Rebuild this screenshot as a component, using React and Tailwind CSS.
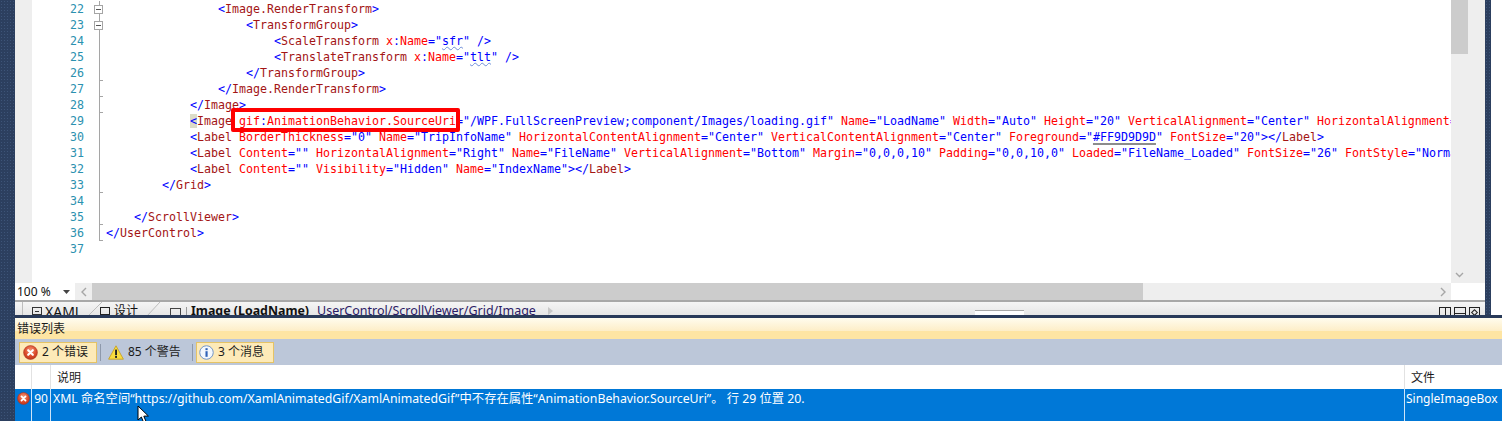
import React from 'react';

const monoFont = "font-['DejaVu_Sans_Mono','Liberation_Mono',monospace]";
const uiFont = "font-['Noto_Sans','Noto_Sans_CJK_SC',sans-serif]";
const navy = "bg-[#2c3f5f] bg-[radial-gradient(#3d5478_1px,transparent_1px)] bg-[length:3px_3px]";

const tag = 'text-[#0000ff]';
const el = 'text-[#a31515]';
const attr = 'text-[#ff0000]';

const T = ({ c, children }) => <span className={c}>{children}</span>;

const Attr = ({ name, value }) => (
  <>
    <T c={attr}> {name}</T>
    <T c={tag}>="{value}"</T>
  </>
);

const lines = [
  { n: 22, indent: 16, fold: true, body: <><T c={tag}>&lt;</T><T c={el}>Image.RenderTransform</T><T c={tag}>&gt;</T></> },
  { n: 23, indent: 20, fold: true, body: <><T c={tag}>&lt;</T><T c={el}>TransformGroup</T><T c={tag}>&gt;</T></> },
  { n: 24, indent: 24, body: <><T c={tag}>&lt;</T><T c={el}>ScaleTransform</T><T c={attr}> x</T><T c={tag}>:</T><T c={attr}>Name</T><T c={tag}>="</T><span className="text-[#0000ff] underline decoration-wavy decoration-[#6f8fd8] decoration-1">sfr</span><T c={tag}>" /&gt;</T></> },
  { n: 25, indent: 24, body: <><T c={tag}>&lt;</T><T c={el}>TranslateTransform</T><T c={attr}> x</T><T c={tag}>:</T><T c={attr}>Name</T><T c={tag}>="</T><span className="text-[#0000ff] underline decoration-wavy decoration-[#6f8fd8] decoration-1">tlt</span><T c={tag}>" /&gt;</T></> },
  { n: 26, indent: 20, tick: true, body: <><T c={tag}>&lt;/</T><T c={el}>TransformGroup</T><T c={tag}>&gt;</T></> },
  { n: 27, indent: 16, tick: true, body: <><T c={tag}>&lt;/</T><T c={el}>Image.RenderTransform</T><T c={tag}>&gt;</T></> },
  { n: 28, indent: 12, tick: true, body: <><T c={tag}>&lt;/</T><T c={el}>Image</T><T c={tag}>&gt;</T></> },
  {
    n: 29,
    indent: 12,
    body: (
      <>
        <span className="bg-[#dcdcc8] text-[#0000ff]">&lt;</span>
        <T c={el}>Image</T>
        <T c={attr}> gif</T><T c={tag}>:</T><T c={attr}>AnimationBehavior.SourceUri</T>
        <T c={tag}>="/WPF.FullScreenPreview;component/Images/loading.gif"</T>
        <Attr name="Name" value="LoadName" />
        <Attr name="Width" value="Auto" />
        <Attr name="Height" value="20" />
        <Attr name="VerticalAlignment" value="Center" />
        <T c={attr}> HorizontalAlignment</T><T c={tag}>=</T>
      </>
    ),
  },
  {
    n: 30,
    indent: 12,
    body: (
      <>
        <T c={tag}>&lt;</T><T c={el}>Label</T>
        <Attr name="BorderThickness" value="0" />
        <Attr name="Name" value="TripInfoName" />
        <Attr name="HorizontalContentAlignment" value="Center" />
        <Attr name="VerticalContentAlignment" value="Center" />
        <T c={attr}> Foreground</T><T c={tag}>="</T>
        <span className="text-[#0000ff] underline decoration-[#8c8c8c] decoration-2 underline-offset-2">#FF9D9D9D</span>
        <T c={tag}>"</T>
        <Attr name="FontSize" value="20" />
        <T c={tag}>&gt;&lt;/</T><T c={el}>Label</T><T c={tag}>&gt;</T>
      </>
    ),
  },
  {
    n: 31,
    indent: 12,
    body: (
      <>
        <T c={tag}>&lt;</T><T c={el}>Label</T>
        <Attr name="Content" value="" />
        <Attr name="HorizontalAlignment" value="Right" />
        <Attr name="Name" value="FileName" />
        <Attr name="VerticalAlignment" value="Bottom" />
        <Attr name="Margin" value="0,0,0,10" />
        <Attr name="Padding" value="0,0,10,0" />
        <Attr name="Loaded" value="FileName_Loaded" />
        <Attr name="FontSize" value="26" />
        <T c={attr}> FontStyle</T><T c={tag}>="Norma</T>
      </>
    ),
  },
  {
    n: 32,
    indent: 12,
    body: (
      <>
        <T c={tag}>&lt;</T><T c={el}>Label</T>
        <Attr name="Content" value="" />
        <Attr name="Visibility" value="Hidden" />
        <Attr name="Name" value="IndexName" />
        <T c={tag}>&gt;&lt;/</T><T c={el}>Label</T><T c={tag}>&gt;</T>
      </>
    ),
  },
  { n: 33, indent: 8, tick: true, body: <><T c={tag}>&lt;/</T><T c={el}>Grid</T><T c={tag}>&gt;</T></> },
  { n: 34, indent: 0, body: null },
  { n: 35, indent: 4, tick: true, body: <><T c={tag}>&lt;/</T><T c={el}>ScrollViewer</T><T c={tag}>&gt;</T></> },
  { n: 36, indent: 0, tick: true, body: <><T c={tag}>&lt;/</T><T c={el}>UserControl</T><T c={tag}>&gt;</T></> },
  { n: 37, indent: 0, body: null, noLine: true },
];

const FoldGutter = ({ line }) => (
  <div className="relative w-[12px] shrink-0 h-4">
    {!line.noLine && <div className="absolute left-[5px] top-0 bottom-0 w-px bg-[#a5a5a5]" />}
    {line.fold && (
      <div className="absolute left-0 top-[4px] w-[9px] h-[9px] border border-[#a5a5a5] bg-white flex items-center justify-center">
        <div className="w-[5px] h-px bg-[#555555]" />
      </div>
    )}
    {line.tick && <div className="absolute left-[5px] bottom-0 w-[4px] h-px bg-[#a5a5a5]" />}
  </div>
);

const ErrorIcon = ({ id, size = 15 }) => (
  <svg width={size} height={size} viewBox="0 0 16 16" className="shrink-0">
    <defs>
      <radialGradient id={id} cx="0.5" cy="0.35" r="0.75">
        <stop offset="0" stopColor="#f59a7c" />
        <stop offset="0.55" stopColor="#dc4a2a" />
        <stop offset="1" stopColor="#b0301a" />
      </radialGradient>
    </defs>
    <circle cx="8" cy="8" r="7.4" fill={`url(#${id})`} stroke="#a8341f" strokeWidth="0.6" />
    <path d="M5.5 5.5 L10.5 10.5 M10.5 5.5 L5.5 10.5" stroke="#ffffff" strokeWidth="2.2" strokeLinecap="round" />
  </svg>
);

const WarnIcon = () => (
  <svg width="16" height="15" viewBox="0 0 16 15" className="shrink-0">
    <path d="M8 0.8 L15.4 14.2 L0.6 14.2 Z" fill="#f9dc3e" stroke="#c39a1e" strokeWidth="0.8" strokeLinejoin="round" />
    <rect x="7.1" y="4.6" width="1.9" height="5.6" fill="#222222" />
    <rect x="7.1" y="11" width="1.9" height="1.9" fill="#222222" />
  </svg>
);

const InfoIcon = () => (
  <svg width="15" height="15" viewBox="0 0 16 16" className="shrink-0">
    <circle cx="8" cy="8" r="7.2" fill="#f4f8fd" stroke="#6a8fc4" strokeWidth="1" />
    <rect x="6.9" y="6.6" width="2.3" height="6" fill="#2f62b8" />
    <rect x="6.9" y="3.4" width="2.3" height="2.1" fill="#2f62b8" />
  </svg>
);

const FilterButton = ({ active, className, children }) => (
  <div
    className={`h-[21px] flex items-center gap-[4px] text-[12px] text-[#1b1b1b] border ${className} ${
      active ? 'bg-[#fdeab8] border-[#e5c365]' : 'border-transparent'
    }`}
  >
    {children}
  </div>
);

const App = () => {
  return (
    <div className={`relative w-[1502px] h-[421px] overflow-hidden flex flex-col ${navy} ${uiFont}`}>
      <div className="h-[315px] flex shrink-0 pl-[15px]">
        <div className="w-[1470px] shrink-0 flex flex-col bg-white">
          <div className="h-[283px] flex shrink-0">
            <div className="w-[17px] shrink-0 bg-[#eeeeee]" />
            <div className={`w-[1419px] shrink-0 overflow-hidden pt-[1px] ${monoFont} text-[11.63px] leading-4`}>
              {lines.map((line) => (
                <div key={line.n} className="flex h-4">
                  <div className="w-[52px] shrink-0 text-right text-[#2b91af]">{line.n}</div>
                  <div className="w-[10px] shrink-0" />
                  <FoldGutter line={line} />
                  <div className="whitespace-pre" style={{ paddingLeft: line.indent * 7 }}>
                    {line.body}
                  </div>
                </div>
              ))}
            </div>
            <div className="w-[17px] shrink-0 bg-[#eeeeee] flex flex-col justify-between items-center">
              <div className="w-[17px] h-[54px] bg-[#cccccc]" />
              <svg width="9" height="6" viewBox="0 0 9 6" className="mb-[5px]">
                <path d="M1 1 L4.5 4.5 L8 1" fill="none" stroke="#a6a6a6" strokeWidth="1.4" />
              </svg>
            </div>
            <div className="w-[17px] shrink-0 bg-[#eeeeee]" />
          </div>

          <div className="h-[17px] flex shrink-0">
            <div className="w-[60px] shrink-0 flex items-center justify-between pl-[2px] pr-[5px] text-[12px] text-[#111111] bg-white">
              <span>100 %</span>
              <svg width="7" height="4" viewBox="0 0 7 4"><path d="M0 0 H7 L3.5 4 Z" fill="#444444" /></svg>
            </div>
            <div className="w-[17px] shrink-0 bg-[#eeeeee] flex items-center justify-center">
              <svg width="6" height="10" viewBox="0 0 6 10"><path d="M5 1 L1 5 L5 9" fill="none" stroke="#a6a6a6" strokeWidth="1.4" /></svg>
            </div>
            <div className="w-[1051px] shrink-0 bg-[#cccccc]" />
            <div className="w-[308px] shrink-0 bg-[#eeeeee] flex items-center justify-end pr-[5px]">
              <svg width="6" height="10" viewBox="0 0 6 10"><path d="M1 1 L5 5 L1 9" fill="none" stroke="#a6a6a6" strokeWidth="1.4" /></svg>
            </div>
            <div className="flex-1 bg-white" />
          </div>

          <div className="relative h-[15px] shrink-0 overflow-hidden flex items-start border-t-2 border-[#a8a8a8] bg-gradient-to-b from-[#f5f5f5] to-[#e6e6e6] text-[#111111] leading-[16px]">
            <div className="w-[8px] h-full shrink-0 border-r border-[#bdbdbd]" />
            <div className="w-[9px] shrink-0" />
            <div className="w-[10px] h-[8px] shrink-0 border border-[#333333] mt-[5px] mr-[3px] flex items-center justify-center">
              <div className="w-[4px] h-px bg-[#333333]" />
            </div>
            <span className="text-[14px] w-[43px] shrink-0 mt-[2px]">XAML</span>
            {/* tab slant */}
            <svg width="16" height="14" viewBox="0 0 16 14" className="shrink-0 -mr-[4px]">
              <path d="M0 14 L14 0" stroke="#bdbdbd" strokeWidth="1" fill="none" />
            </svg>
            <div className="w-[10px] h-[8px] shrink-0 border border-[#222222] mt-[5px] mr-[4px]" />
            <span className="text-[12px] w-[24px] shrink-0 mt-[1px]">设计</span>
            <svg width="14" height="14" viewBox="0 0 14 14" className="shrink-0 ml-[9px] mr-[9px]">
              <path d="M0 14 L13 0" stroke="#bdbdbd" strokeWidth="1" fill="none" />
            </svg>
            <div className="w-[11px] h-[9px] shrink-0 border border-[#444444] mt-[6px] mr-[5px]" />
            <div className="w-px h-[10px] shrink-0 bg-[#999999] mt-[5px] mr-[4px]" />
            <span className="text-[12.4px] font-bold w-[126px] shrink-0 mt-[1px] whitespace-nowrap">Image (LoadName)</span>
            <span className="text-[12.5px] text-[#2b1a66] w-[231px] shrink-0 mt-[1px] whitespace-nowrap">UserControl/ScrollViewer/Grid/Image</span>
            <svg width="5" height="8" viewBox="0 0 5 8" className="shrink-0 mt-[5px]"><path d="M0 0 L5 4 L0 8 Z" fill="#c8c8c8" /></svg>
            <div className="w-[49px] h-[6px] shrink-0 ml-[422px] mt-[8px] border-y border-[#a8a8a8] bg-white" />
            <div className="ml-auto mr-[5px] flex gap-[3px] mt-[5px]">
              <div className="w-[12px] h-[12px] border border-[#222222] flex justify-center"><div className="w-px h-full bg-[#222222]" /></div>
              <div className="w-[12px] h-[12px] border border-[#222222] flex items-center justify-center"><div className="w-full h-px bg-[#222222]" /></div>
              <div className="w-[11px] h-[12px] border border-[#222222] flex justify-center pt-[2px]"><div className="w-[5px] h-[5px] rotate-45 border border-[#222222]" /></div>
            </div>
          </div>
        </div>
        <div className="w-[6px] shrink-0" />
        <div className="flex-1 bg-white" />
      </div>

      <div className="h-[3px] shrink-0 ml-[15px] bg-[#293a59]" />

      <div className="flex-1 ml-[15px] flex flex-col min-h-0">
        <div className="h-[21px] shrink-0 flex items-center pl-[2px] pt-[1px] text-[12px] text-[#1b1b1b] bg-[linear-gradient(#fffcee,#fdeec8_60%,#fee5a3_62%,#fee5a3)]">
          错误列表
        </div>
        <div className="h-[26px] shrink-0 bg-[#bcc7d9] flex items-center pl-[4px]">
          <FilterButton active className="w-[78px] pl-[3px]"><ErrorIcon id="err-a" /> <span>2 个错误</span></FilterButton>
          <div className="w-px h-[17px] bg-[#8e99ab] mx-[3px]" />
          <FilterButton className="w-[85px] pl-[3px]"><WarnIcon /> <span>85 个警告</span></FilterButton>
          <div className="w-px h-[17px] bg-[#8e99ab] mx-[3px]" />
          <FilterButton active className="w-[78px] pl-[2px]"><InfoIcon /> <span>3 个消息</span></FilterButton>
        </div>
        <div className="h-[24px] shrink-0 bg-white flex text-[12px] text-[#1b1b1b]">
          <div className="w-[17px] shrink-0 border-r border-[#e2e2e2]" />
          <div className="w-[19px] shrink-0 border-r border-[#e2e2e2]" />
          <div className="w-[1354px] shrink-0 border-r border-[#e2e2e2] pl-[6px] pt-[1px] flex items-center">说明</div>
          <div className="flex-1 pl-[6px] pt-[1px] flex items-center">文件</div>
        </div>
        <div className="flex-1 bg-[#0078d7] flex text-[12px] text-white leading-[20px]">
          <div className="w-[17px] shrink-0 border-r border-[#cfe4f7] pt-[3px] flex justify-center">
            <ErrorIcon id="err-b" size={13} />
          </div>
          <div className="w-[19px] shrink-0 border-r border-[#cfe4f7] text-center">90</div>
          <div className="w-[1354px] shrink-0 border-r border-[#cfe4f7] pl-[2px] whitespace-nowrap text-[12.3px]">
            XML 命名空间“https://github.com/XamlAnimatedGif/XamlAnimatedGif”中不存在属性“AnimationBehavior.SourceUri”。 行 29 位置 20.
          </div>
          <div className="flex-1 pl-[1px] whitespace-nowrap">SingleImageBox</div>
        </div>
      </div>

      {/* red callout around the attribute name */}
      <div className="absolute left-[231px] top-[108px] w-[229px] h-[24px] border-4 border-[#ff0000] rounded-[2px]" />

      {/* mouse pointer */}
      <svg width="13" height="19" viewBox="0 0 13 19" className="absolute left-[137px] top-[405px]">
        <path d="M1 1 L1 15 L4.4 12 L6.6 17.4 L9 16.4 L6.8 11.2 L11.4 11 Z" fill="#ffffff" stroke="#000000" strokeWidth="1" />
      </svg>
    </div>
  );
};

export default App;
